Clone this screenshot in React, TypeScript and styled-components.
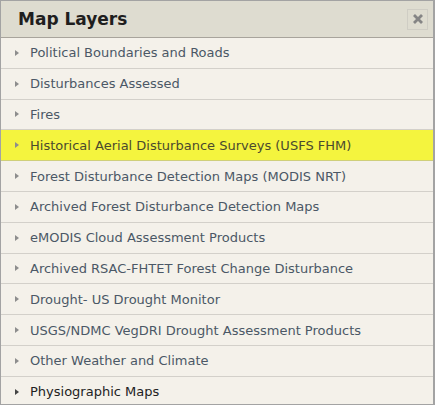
import styled, { createGlobalStyle } from 'styled-components';

const GlobalStyle = createGlobalStyle`
  html, body {
    margin: 0;
    padding: 0;
    background: #ffffff;
  }
`;

const Panel = styled.div`
  width: 432px;
  height: 403px;
  border: 1px solid #a3a3a3;
  border-right-width: 2px;
  background: #f4f1ea;
  font-family: 'DejaVu Sans', Verdana, sans-serif;
  overflow: hidden;
`;

const Header = styled.div`
  height: 36px;
  display: flex;
  align-items: center;
  justify-content: space-between;
  padding: 0 5px 0 17px;
  background: #dedcd0;
  border-bottom: 1px solid #a8a49c;
`;

const Title = styled.h2`
  margin: 0;
  font-size: 17px;
  font-weight: bold;
  color: #1e1e1e;
`;

const CloseButton = styled.button`
  width: 21px;
  height: 21px;
  display: flex;
  align-items: center;
  justify-content: center;
  padding: 0;
  background: transparent;
  border: 1px solid #cfcdc4;
  color: #858585;
  cursor: pointer;
  svg {
    width: 10px;
    height: 10px;
  }
`;

const List = styled.ul`
  list-style: none;
  margin: 0;
  padding: 0;
`;

const Row = styled.li<{ $active?: boolean; $dark?: boolean }>`
  height: 29.8px;
  display: flex;
  align-items: center;
  gap: 11px;
  padding-left: 14px;
  border-bottom: 1px solid ${(p) => (p.$active ? '#cfcf7a' : '#d3d0ca')};
  background: ${(p) => (p.$active ? '#f4f43e' : 'transparent')};
  color: ${(p) => (p.$active ? '#4a4a2e' : p.$dark ? '#222222' : '#4b5866')};
  font-size: 13px;
  white-space: nowrap;
  cursor: pointer;
  &:last-child {
    border-bottom: none;
  }
`;

const Arrow = styled.span<{ $dark?: boolean }>`
  width: 0;
  height: 0;
  border-top: 3.5px solid transparent;
  border-bottom: 3.5px solid transparent;
  border-left: 4px solid ${(p) => (p.$dark ? '#444444' : '#8d8d8d')};
  flex-shrink: 0;
`;

const layers = [
  'Political Boundaries and Roads',
  'Disturbances Assessed',
  'Fires',
  'Historical Aerial Disturbance Surveys (USFS FHM)',
  'Forest Disturbance Detection Maps (MODIS NRT)',
  'Archived Forest Disturbance Detection Maps',
  'eMODIS Cloud Assessment Products',
  'Archived RSAC-FHTET Forest Change Disturbance',
  'Drought- US Drought Monitor',
  'USGS/NDMC VegDRI Drought Assessment Products',
  'Other Weather and Climate',
  'Physiographic Maps',
];

export default function App() {
  return (
    <>
      <GlobalStyle />
      <Panel>
        <Header>
          <Title>Map Layers</Title>
          <CloseButton aria-label="close">
            <svg viewBox="0 0 10 10">
              <path d="M1 1 L9 9 M9 1 L1 9" stroke="currentColor" strokeWidth="2.8" strokeLinecap="butt" />
            </svg>
          </CloseButton>
        </Header>
        <List>
          {layers.map((name, i) => {
            const active = i === 3;
            const dark = i === layers.length - 1;
            return (
              <Row key={name} $active={active} $dark={dark}>
                <Arrow $dark={dark} />
                {name}
              </Row>
            );
          })}
        </List>
      </Panel>
    </>
  );
}
